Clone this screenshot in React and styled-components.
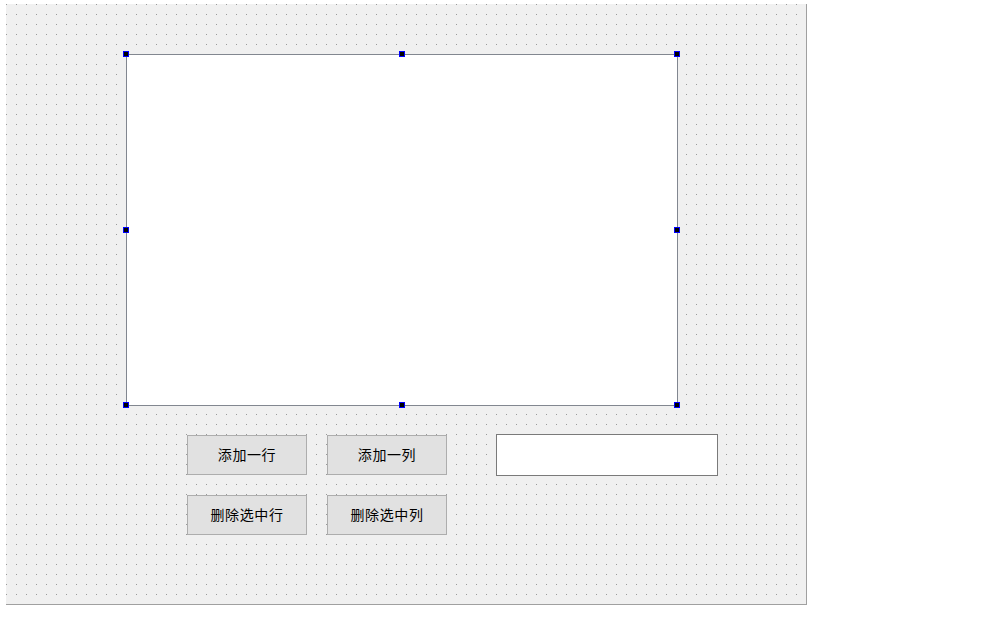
import React from "react";
import styled, { createGlobalStyle } from "styled-components";

const GlobalStyle = createGlobalStyle`
  html, body {
    margin: 0;
    background: #ffffff;
  }
  body {
    font-family: "Noto Sans CJK SC", "Noto Sans", sans-serif;
  }
`;

const Page = styled.div`
  padding: 4px 0 0 6px;
`;

const FormCanvas = styled.div`
  box-sizing: border-box;
  width: 801px;
  height: 601px;
  padding: 50px 0 0 120px;
  background-color: #f0f0f0;
  background-image: conic-gradient(from 270deg at 1px 1px, #9a9a9a 90deg, transparent 0);
  background-size: 10px 10px;
  border-right: 1px solid #a0a0a0;
  border-bottom: 1px solid #a0a0a0;
`;

const TableWidget = styled.div`
  position: relative;
  box-sizing: border-box;
  width: 552px;
  height: 352px;
  background: #ffffff;
  border: 1px solid #828790;
`;

const Handle = styled.span`
  position: absolute;
  box-sizing: border-box;
  width: 6px;
  height: 6px;
  background: #000000;
  border: 1px solid #0000ff;
  ${(p) => (p.$x === "l" ? "left: -4px;" : p.$x === "r" ? "right: -3px;" : "left: calc(50% - 3px);")}
  ${(p) => (p.$y === "t" ? "top: -4px;" : p.$y === "b" ? "bottom: -3px;" : "top: calc(50% - 3px);")}
`;

const Controls = styled.div`
  display: grid;
  grid-template-columns: 120px 120px 222px;
  grid-template-rows: 40px 40px;
  column-gap: 20px;
  row-gap: 20px;
  margin: 29px 0 0 61px;
`;

const PushButton = styled.button`
  box-sizing: border-box;
  width: 120px;
  height: 40px;
  padding: 0 0 3px;
  background: #e1e1e1;
  border: 1px solid #adadad;
  color: #000000;
  font-family: "Noto Sans CJK SC", "Noto Sans", sans-serif;
  font-size: 14px;
  font-weight: 400;
  letter-spacing: 0.6px;
`;

const LineEdit = styled.input`
  box-sizing: border-box;
  width: 222px;
  height: 42px;
  margin: -1px 0 0 29px;
  background: #ffffff;
  border: 1px solid #7a7a7a;
  outline: none;
`;

const handles = [
  ["l", "t"], ["m", "t"], ["r", "t"],
  ["l", "m"], ["r", "m"],
  ["l", "b"], ["m", "b"], ["r", "b"],
];

export default function App() {
  return (
    <>
      <GlobalStyle />
      <Page>
        <FormCanvas>
          <TableWidget>
            {handles.map(([x, y]) => (
              <Handle key={x + y} $x={x} $y={y} />
            ))}
          </TableWidget>
          <Controls>
            <PushButton>添加一行</PushButton>
            <PushButton>添加一列</PushButton>
            <LineEdit />
            <PushButton>删除选中行</PushButton>
            <PushButton>删除选中列</PushButton>
          </Controls>
        </FormCanvas>
      </Page>
    </>
  );
}
